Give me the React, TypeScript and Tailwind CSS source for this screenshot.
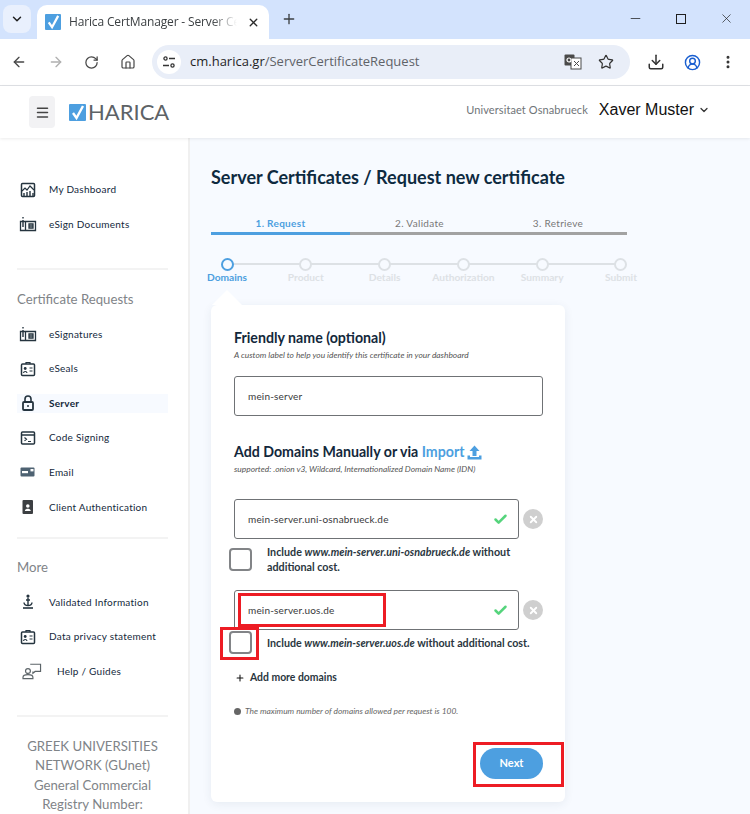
import React from "react";
import { ArrowLeft, ArrowRight, RotateCw, House, Star, Download, CircleUserRound, EllipsisVertical, X, Plus, Minus, ChevronDown, Check, Menu } from "lucide-react";

const Ic = ({ children, w = 18, h = 18 }: { children: React.ReactNode; w?: number; h?: number }) => (
  <svg width={w} height={h} viewBox="0 0 18 18" fill="none" stroke="#25343f" strokeWidth="1.5">{children}</svg>
);

const Dash = () => (
  <Ic>
    <rect x="2.5" y="2.5" width="13" height="13" rx="1" />
    <path d="M3 10l3-3 2 2 3-4 4 4" strokeWidth="1.2" />
    <path d="M5 15v-3M8 15v-4M11 15v-5M14 15v-3" strokeWidth="1.4" />
  </Ic>
);
const Sign = () => (
  <Ic>
    <path d="M1.5 6.5h15v9h-15zM6.500 6.500v9M10 9h4v4h-4zM10 11h4" strokeWidth="1.300" />
    <path d="M4 2v1.600M4 5v7" strokeWidth="1.400" />
  </Ic>
);
const Seal = () => (
  <Ic>
    <rect x="2.5" y="4" width="13" height="11.5" rx="1" />
    <path d="M7 4V2.5h4V4M10.5 8h3M10.5 11h3M4.5 13c.3-2 3.2-2 3.5 0" strokeWidth="1.2" />
    <circle cx="6.2" cy="8.5" r="1.4" fill="#25343f" stroke="none" />
  </Ic>
);
const Lock = () => (
  <Ic>
    <rect x="4" y="8" width="10" height="8" rx="1" strokeWidth="1.8" />
    <path d="M6 8V5a3 3 0 0 1 6 0v3" strokeWidth="1.6" />
    <circle cx="9" cy="12" r="1" fill="#25343f" stroke="none" />
  </Ic>
);
const Code = () => (
  <Ic>
    <rect x="2.5" y="3" width="13" height="12" rx="1" />
    <path d="M2.5 6h13" />
    <path d="M5.5 8.5l2 1.7-2 1.7M9 12.5h3" strokeWidth="1.2" />
  </Ic>
);
const Mail = () => (
  <svg width="18" height="18" viewBox="0 0 18 18">
    <rect x="1.5" y="4.5" width="14" height="9" rx="1" fill="#4e6272" />
    <rect x="3" y="8" width="6" height="2.2" fill="#fff" />
    <rect x="11.5" y="6" width="3" height="2.4" fill="#fff" />
  </svg>
);
const Badge = () => (
  <svg width="18" height="18" viewBox="0 0 18 18">
    <rect x="3.5" y="2" width="10.5" height="14" rx="1" fill="#3c3f42" />
    <circle cx="8.8" cy="8" r="1.8" fill="#fff" />
    <path d="M5.8 13c.3-3 5.7-3 6 0z" fill="#fff" />
  </svg>
);
const Anchor = () => (
  <Ic>
    <circle cx="9" cy="3" r="1.600" fill="#25343f" stroke="none" />
    <path d="M9 4.500v8M7 7h4" strokeWidth="1.400" />
    <path d="M5 9.500c.2 4 7.800 4 8 0" strokeWidth="1.400" />
    <path d="M4 15h10" strokeWidth="1.600" />
  </Ic>
);
const Help = () => (
  <svg width="20" height="18" viewBox="0 0 22 20" fill="none" stroke="#5c6468" strokeWidth="1.3" className="ml-[3px]">
    <path d="M9 2.500h11.500v8h-6l-2.500 2v-2" />
    <circle cx="6.500" cy="10" r="2.700" />
    <path d="M1 18.500v-1.500c0-2 2-3 5.500-3s5.500 1 5.500 3v1.500z" />
  </svg>
);

const Item = ({ icon, label, bold, indent }: { icon: React.ReactNode; label: string; bold?: boolean; indent?: boolean }) => (
  <div className={`flex items-center h-[19px] mb-[15.6px] ${bold ? "bg-[#f7faff]" : ""}`}>
    <span className="w-[32px] flex items-center justify-start shrink-0 pl-[2px]">{icon}</span>
    <span className={`text-[10px] tracking-[0.25px] text-[#13283b] whitespace-nowrap ${bold ? "font-bold" : ""} ${indent ? "ml-[8px]" : ""}`}>{label}</span>
  </div>
);

const Step = ({ label, active }: { label: string; active?: boolean }) => (
  <div className="relative flex flex-col items-center w-[60px]">
    <div className={`w-[13px] h-[13px] rounded-full border-2 bg-[#f7faff] ${active ? "border-[#4d9fe0]" : "border-[#dde1e5]"}`} />
    <span className={`text-[10.200px] font-bold -mt-[1px] leading-[15px] whitespace-nowrap ${active ? "text-[#4d9fe0]" : "text-[#dde1e5]"}`}>{label}</span>
  </div>
);

const Tick = () => <Check size={15} strokeWidth={4} className="text-[#55d47c]" />;
const Remove = () => (
  <span className="w-[20px] h-[20px] rounded-full bg-[#cfcfcf] flex items-center justify-center shrink-0">
    <X size={11} strokeWidth={4} className="text-white" />
  </span>
);
const DomainInput = ({ value }: { value: string }) => (
  <div className="flex items-center gap-[4px] w-[309px]">
    <div className="w-[285px] h-[40px] border border-[#6f7275] rounded-[3px] flex items-center justify-between pl-[13px] pr-[10px] text-[10px] tracking-[0.18px] text-[#38393b]">
      <span>{value}</span>
      <Tick />
    </div>
    <Remove />
  </div>
);
const Box = () => <div className="w-[23px] h-[23px] border-2 border-[#828487] rounded-[4px] shrink-0 bg-white" />;
const Ticked = ({ size }: { size: number }) => (
  <svg width={size} height={size} viewBox="0 0 17 17" className="shrink-0">
    <rect width="17" height="17" rx="1" fill="#4d9fe0" />
    <path d="M4 9l3.500 5L14 2" fill="none" stroke="#fff" strokeWidth="2.400" />
  </svg>
);

export default function App() {
  return (
    <div className="w-[750px] h-[814px] overflow-hidden bg-white relative font-['Lato',sans-serif]">
      {/* tab strip */}
      <div className="h-[39px] bg-[#d3e3fd] flex items-end relative font-['Open_Sans',sans-serif]">
        <div className="absolute left-[3px] top-[5px] w-[28px] h-[28px] rounded-[8px] bg-[#e9f0fd] flex items-center justify-center">
          <ChevronDown size={14} strokeWidth={2.5} className="text-[#1f1f1f]" />
        </div>
        <div className="ml-[37px] w-[232px] h-[34px] bg-white rounded-t-[10px] flex items-center pl-[8px] pr-[9px]">
          <Ticked size={16} />
          <span className="ml-[8px] text-[12px] tracking-[-0.15px] text-[#3c4043] w-[168px] overflow-hidden whitespace-nowrap [mask-image:linear-gradient(to_right,black_85%,transparent)]">Harica CertManager - Server Certificates</span>
          <X size={13} strokeWidth={2.5} className="ml-[10px] text-[#2b2b2b]" />
        </div>
        <Plus size={16} strokeWidth={2} className="ml-[12px] mb-[12px] text-[#3c4043]" />
        <div className="ml-auto flex items-center mb-[13px] text-[#1f1f1f]">
          <Minus size={15} strokeWidth={1.2} className="mr-[33px]" />
          <div className="w-[10px] h-[10px] border border-[#1f1f1f] mr-[33px]" />
          <X size={15} strokeWidth={1.1} className="mr-[16px]" />
        </div>
      </div>
      {/* toolbar */}
      <div className="h-[47px] flex items-center border-b border-[#dfe1e5] rounded-tr-[8px] bg-white pl-[11px] pr-[13px] text-[#474747] font-['Open_Sans',sans-serif]">
        <ArrowLeft size={16} strokeWidth={2} />
        <ArrowRight size={16} strokeWidth={2} className="ml-[21px] text-[#b0b0b0]" />
        <RotateCw size={15} strokeWidth={2} className="ml-[20px]" />
        <House size={16} strokeWidth={1.8} className="ml-[21px]" />
        <div className="ml-[16px] w-[478px] h-[34px] rounded-full bg-[#e9eef8] flex items-center pl-[5px] pr-[16px]">
          <div className="w-[24px] h-[24px] rounded-full bg-white flex items-center justify-center">
            <svg width="16" height="16" viewBox="0 0 16 16" fill="none" stroke="#333" strokeWidth="1.3">
              <circle cx="4.500" cy="4.500" r="1.600" /><path d="M8 4.500h6M2 11.500h6" /><circle cx="11.500" cy="11.500" r="1.600" />
            </svg>
          </div>
          <span className="ml-[9px] text-[13px] text-[#5f6368]"><span className="text-[#1f1f1f]">cm.harica.gr</span>/ServerCertificateRequest</span>
          <div className="ml-auto flex items-center gap-[16px]">
            <svg width="18" height="16" viewBox="0 0 18 16">
              <rect x="0.500" y="0.500" width="10" height="11" rx="1" fill="#4a4a4a" />
              <rect x="7" y="4" width="10" height="11" fill="#fff" stroke="#4a4a4a" />
              <path d="M10 7l5 5M15 7l-5 5" stroke="#4a4a4a" strokeWidth="1" />
              <circle cx="5" cy="6" r="2" fill="none" stroke="#fff" strokeWidth="1.200" />
            </svg>
            <Star size={16} strokeWidth={1.8} className="text-[#333]" />
          </div>
        </div>
        <Download size={18} strokeWidth={2} className="ml-[17px] text-[#333]" />
        <CircleUserRound size={17} strokeWidth={2} className="ml-[19px] text-[#1a5fd0]" />
        <EllipsisVertical size={16} strokeWidth={2.5} className="ml-[19px] text-[#333]" />
      </div>
      {/* app header */}
      <div className="h-[52px] flex items-center bg-white shadow-[0_1px_3px_rgba(0,0,0,0.08)] relative z-10 pl-[29px] pr-[40px]">
        <div className="w-[26px] h-[32px] rounded-[4px] bg-[#f2f2f4] flex items-center justify-center">
          <Menu size={15} strokeWidth={2.4} className="text-[#444]" />
        </div>
        <div className="ml-[14px]"><Ticked size={17} /></div>
        <span className="ml-[2px] text-[22px] leading-none text-[#5d6266]">HARICA</span>
        <span className="ml-auto -mt-[4px] text-[11px] tracking-[0.1px] text-[#6f7478]">Universitaet Osnabrueck</span>
        <span className="ml-[11px] -mt-[4px] text-[16px] text-[#111] font-['Liberation_Sans',sans-serif]">Xaver Muster</span>
        <ChevronDown size={12} strokeWidth={2.5} className="ml-[4px] -mt-[4px] text-[#333]" />
      </div>
      <div className="flex h-[676px]">
        {/* sidebar */}
        <aside className="w-[190px] shrink-0 border-r-2 border-[#f0f0f0] bg-white pl-[17px] pr-[20px] pt-[42px] overflow-hidden">
          <Item icon={<Dash />} label="My Dashboard" />
          <Item icon={<Sign />} label="eSign Documents" />
          <div className="h-[2px] bg-[#f3f3f3] mt-[34px]" />
          <div className="text-[13.200px] leading-[20px] text-[#7f8488] mt-[19px] mb-[16px]">Certificate Requests</div>
          <Item icon={<Sign />} label="eSignatures" />
          <Item icon={<Seal />} label="eSeals" />
          <Item icon={<Lock />} label="Server" bold />
          <Item icon={<Code />} label="Code Signing" />
          <Item icon={<Mail />} label="Email" />
          <Item icon={<Badge />} label="Client Authentication" />
          <div className="h-[2px] bg-[#f3f3f3] mt-[20px]" />
          <div className="text-[13.200px] leading-[20px] text-[#7f8488] mt-[18px] mb-[16px]">More</div>
          <Item icon={<Anchor />} label="Validated Information" />
          <Item icon={<Seal />} label="Data privacy statement" />
          <Item icon={<Help />} label="Help / Guides" indent />
          <div className="h-[2px] bg-[#f3f3f3] mt-[34px]" />
          <div className="text-[13.200px] leading-[19.500px] text-[#7f8488] text-center mt-[20px]">
            GREEK UNIVERSITIES NETWORK (GUnet) General Commercial Registry Number:
          </div>
        </aside>
        {/* main */}
        <main className="flex-1 bg-[#f7faff] pl-[21px] pt-[26px] min-w-0">
          <h1 className="text-[18px] leading-[26px] font-bold text-[#0e2a3f] whitespace-nowrap">Server Certificates / Request new certificate</h1>
          <div className="w-[416px] mt-[26px] flex text-[10px] leading-[15px] tracking-[0.3px]">
            <div className="w-[139px] text-center font-bold text-[#4d9fe0] border-b-[3px] border-[#4d9fe0] pb-[1px]">1. Request</div>
            <div className="w-[139px] text-center text-[#777] border-b-[3px] border-[#a2a2a2] pb-[1px]">2. Validate</div>
            <div className="w-[138px] text-center text-[#777] border-b-[3px] border-[#a2a2a2] pb-[1px]">3. Retrieve</div>
          </div>
          <div className="relative w-[454px] -ml-[14px] mt-[23px] flex justify-between">
            <div className="absolute left-[30px] right-[30px] top-[5px] h-[2px] bg-[#dde1e5]" />
            <Step label="Domains" active />
            <Step label="Product" />
            <Step label="Details" />
            <Step label="Authorization" />
            <Step label="Summary" />
            <Step label="Submit" />
          </div>
          {/* card */}
          <div className="relative mt-[20px] w-[354px] h-[497px] bg-white rounded-[6px] shadow-[0_2px_10px_rgba(40,60,90,0.08)] pl-[23px] pt-[24px]">
            <div className="absolute left-[1px] -top-[15px] w-0 h-0 border-l-[15px] border-r-[15px] border-b-[15px] border-l-transparent border-r-transparent border-b-white" />
            <h2 className="text-[14.200px] leading-[18px] font-bold text-[#13283b] whitespace-nowrap">Friendly name (optional)</h2>
            <p className="text-[8.400px] leading-[12px] italic text-[#555] mt-[2px]">A custom label to help you identify this certificate in your dashboard</p>
            <div className="mt-[15px] w-[309px] h-[40px] border border-[#6f7275] rounded-[3px] flex items-center pl-[13px] text-[10px] tracking-[0.18px] text-[#38393b]">mein-server</div>
            <h2 className="mt-[27px] text-[14.200px] leading-[18px] font-bold text-[#13283b] whitespace-nowrap flex items-center">
              Add Domains Manually or via&nbsp;<span className="text-[#4d9fe0]">Import</span>
              <svg width="15" height="15" viewBox="0 0 15 15" className="ml-[3px]" fill="#4d9fe0">
                <path d="M7.500 0.500L12.500 6H9.500V11H5.500V6H2.500zM0.500 10.500H3V12H12V10.500H14.500V14.500H0.500z" />
              </svg>
            </h2>
            <p className="text-[8.400px] leading-[12px] italic text-[#555] mt-[2px]">supported: .onion v3, Wildcard, Internationalized Domain Name (IDN)</p>
            <div className="mt-[24px]"><DomainInput value="mein-server.uni-osnabrueck.de" /></div>
            <div className="flex -ml-[5px] mt-[9px]">
              <Box />
              <p className="ml-[15px] -mt-[4px] text-[10.750px] leading-[15px] font-bold text-[#2a3640] w-[270px]">
                Include <em>www.mein-server.uni-osnabrueck.de</em> without additional cost.
              </p>
            </div>
            <div className="mt-[16px]"><DomainInput value="mein-server.uos.de" /></div>
            <div className="flex items-center -ml-[5px] mt-[1px]">
              <Box />
              <p className="ml-[15px] text-[10.700px] leading-[15px] font-bold text-[#2a3640] whitespace-nowrap">
                Include <em>www.mein-server.uos.de</em> without additional cost.
              </p>
            </div>
            <div className="flex items-center mt-[16px] ml-[1px] text-[10.400px] leading-[15px] font-bold text-[#2a3640]">
              <Plus size={10} strokeWidth={2.5} className="text-[#111]" />
              <span className="ml-[5px]">Add more domains</span>
            </div>
            <div className="flex items-center mt-[20px] text-[8.400px] leading-[12px] italic text-[#666]">
              <span className="w-[7px] h-[7px] rounded-full bg-[#666] mr-[4px] shrink-0" />
              The maximum number of domains allowed per request is 100.
            </div>
            <div className="flex justify-end w-[309px] mt-[31px]">
              <button className="w-[63px] h-[31px] rounded-full bg-[#4d9fe0] text-white text-[11px] font-bold">Next</button>
            </div>
          </div>
        </main>
      </div>
      {/* annotation boxes */}
      <div className="absolute left-[238px] top-[593px] w-[148px] h-[34px] border-[3px] border-[#ed1c24]" />
      <div className="absolute left-[220px] top-[627px] w-[39px] h-[33px] border-[3px] border-[#ed1c24]" />
      <div className="absolute left-[473px] top-[742px] w-[91px] h-[45px] border-[3px] border-[#ed1c24]" />
    </div>
  );
}
